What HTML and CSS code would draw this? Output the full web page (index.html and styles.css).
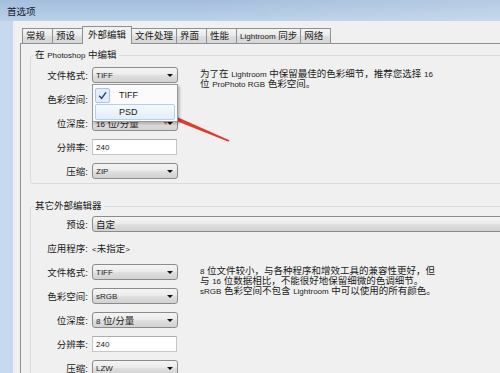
FILE: index.html
```html
<!DOCTYPE html>
<html lang="zh-CN">
<head>
<meta charset="utf-8">
<title>首选项</title>
<link rel="stylesheet" href="styles.css">
</head>
<body>
<div class="window">
  <div class="titlebar">首选项</div>
  <div class="client">
    <div class="tabs">
      <div class="tab">常规</div>
      <div class="tab">预设</div>
      <div class="tab active">外部编辑</div>
      <div class="tab">文件处理</div>
      <div class="tab">界面</div>
      <div class="tab">性能</div>
      <div class="tab"><span class="en">Lightroom</span> 同步</div>
      <div class="tab">网络</div>
    </div>
    <div class="panel">
      <fieldset class="group">
        <legend>在 <span class="en">Photoshop</span> 中编辑</legend>
        <div class="split first">
          <div class="rows">
            <div class="row">
              <label>文件格式:</label>
              <div class="combo"><span class="en">TIFF</span><i class="caret"></i>
                <div class="popup">
                  <div class="item"><span class="gutter checked"><svg width="13" height="13" viewBox="0 0 13 13"><path d="M3.2 6.8 L5.6 9.4 L10 3.4" fill="none" stroke="#23408e" stroke-width="1.5"/></svg></span><span class="en">TIFF</span></div>
                  <div class="item hot"><span class="gutter"></span><span class="en">PSD</span></div>
                </div>
              </div>
            </div>
            <div class="row">
              <label>色彩空间:</label>
              <div class="combo"><span></span><i class="caret"></i></div>
            </div>
            <div class="row">
              <label>位深度:</label>
              <div class="combo"><span><span class="en">16</span> 位/分量</span><i class="caret"></i></div>
            </div>
            <div class="row">
              <label>分辨率:</label>
              <div class="field"><span class="en">240</span></div>
            </div>
            <div class="row">
              <label>压缩:</label>
              <div class="combo"><span class="en">ZIP</span><i class="caret"></i></div>
            </div>
          </div>
          <p class="note">为了在 <span class="en">Lightroom</span> 中保留最佳的色彩细节，推荐您选择 <span class="en">16</span><br>位 <span class="en">ProPhoto RGB</span> 色彩空间。</p>
        </div>
      </fieldset>

      <fieldset class="group second">
        <legend>其它外部编辑器</legend>
        <div class="rows second-rows">
          <div class="row">
            <label>预设:</label>
            <div class="combo wide"><span>自定</span><i class="caret"></i></div>
          </div>
          <div class="row">
            <label>应用程序:</label>
            <span class="value"><span class="en">&lt;</span>未指定<span class="en">&gt;</span></span>
          </div>
          <div class="split">
            <div class="rows">
              <div class="row">
                <label>文件格式:</label>
                <div class="combo"><span class="en">TIFF</span><i class="caret"></i></div>
              </div>
              <div class="row">
                <label>色彩空间:</label>
                <div class="combo"><span class="en">sRGB</span><i class="caret"></i></div>
              </div>
              <div class="row">
                <label>位深度:</label>
                <div class="combo"><span><span class="en">8</span> 位/分量</span><i class="caret"></i></div>
              </div>
              <div class="row">
                <label>分辨率:</label>
                <div class="field"><span class="en">240</span></div>
              </div>
              <div class="row">
                <label>压缩:</label>
                <div class="combo"><span class="en">LZW</span><i class="caret"></i></div>
              </div>
            </div>
            <p class="note"><span class="en">8</span> 位文件较小，与各种程序和增效工具的兼容性更好，但<br>与 <span class="en">16</span> 位数据相比，不能很好地保留细微的色调细节。<br><span class="en">sRGB</span> 色彩空间不包含 <span class="en">Lightroom</span> 中可以使用的所有颜色。</p>
          </div>
        </div>
      </fieldset>
    </div>
  </div>
</div>
<svg class="arrow" width="500" height="373" viewBox="0 0 500 373">
  <polygon points="147,106.5 173.8,107.8 168.6,113.3 229.4,140.2 228.6,141.8 166.9,117.3 166.4,124.8" fill="#e23a30"/>
</svg>
</body>
</html>
```

FILE: styles.css
```css
* { box-sizing: border-box; }

html, body {
  margin: 0;
  padding: 0;
}

body {
  width: 500px;
  height: 373px;
  overflow: hidden;
  position: relative;
  background: #c6d9ef;
  color: #1a1a1a;
  font-family: "Liberation Sans", "Noto Sans CJK SC", sans-serif;
  font-size: 9.5px;
}

.en { font-size: 8px; }

.window { width: 640px; }

.titlebar {
  height: 21px;
  line-height: 23px;
  padding-left: 7px;
  color: #14202e;
  background:
    linear-gradient(to right, rgba(255,255,255,0) 30%, rgba(255,255,255,0.28) 100%),
    linear-gradient(#a4bedc, #bad0e9);
}

.client {
  margin-left: 13px;
  height: 352px;
  padding: 5px 0 0 7px;
  background: #f0f0f0;
}

/* tabs */
.tabs {
  display: flex;
  align-items: flex-end;
  height: 17px;
  padding-left: 2px;
}

.tab {
  height: 15px;
  min-width: 31px;
  padding: 0 3px;
  margin-left: -1px;
  line-height: 14px;
  white-space: nowrap;
  border: 1px solid #8d9095;
  border-bottom: none;
  background: linear-gradient(#f3f3f3, #ebebeb 45%, #dddddd 55%, #d6d6d6);
}

.tab:first-child { margin-left: 0; }

.tab.active {
  position: relative;
  z-index: 1;
  height: 18px;
  padding: 0 5px;
  margin-bottom: -1px;
  line-height: 16px;
  background: #f0f0f0;
}

.panel {
  border-top: 1px solid #8d9095;
  border-left: 1px solid #8d9095;
  padding: 5px 0 0 9px;
  height: 340px;
}

/* group boxes */
.group {
  margin: 0;
  padding: 0 0 4px 0;
  border: 1px solid #d7dce1;
  border-radius: 3px;
  min-width: 0;
}

.group.second { margin-top: 16px; }

legend {
  margin-left: 2px;
  padding: 0 2px;
  line-height: 12px;
}

.split {
  display: flex;
  align-items: flex-start;
}

.split.first { margin-top: 5px; }

.rows {
  display: flex;
  flex-direction: column;
  gap: 8px;
}

.second-rows { margin-top: 4px; }

.row {
  display: flex;
  align-items: center;
  height: 16px;
}

.row label {
  width: 57px;
  margin-right: 4px;
  text-align: right;
  white-space: nowrap;
}

.combo {
  position: relative;
  display: flex;
  align-items: center;
  justify-content: space-between;
  width: 86px;
  height: 16px;
  padding: 0 4px 0 3px;
  border: 1px solid #8b8b8b;
  border-radius: 3px;
  white-space: nowrap;
  background: linear-gradient(#f4f4f4, #ececec 45%, #dedede 55%, #d2d2d2);
}

.combo.wide { width: 440px; }

.caret {
  display: block;
  width: 0;
  height: 0;
  border-left: 3px solid transparent;
  border-right: 3px solid transparent;
  border-top: 3px solid #111;
}

.field {
  display: flex;
  align-items: center;
  width: 85px;
  height: 16px;
  padding-left: 3px;
  background: #fff;
  border: 1px solid #c4c6cc;
  border-top-color: #abadb3;
}

.value { white-space: nowrap; }

.note {
  margin: 2px 0 0 22px;
  line-height: 9px;
  white-space: nowrap;
}

/* dropdown list */
.popup {
  position: absolute;
  z-index: 5;
  left: -1px;
  top: 16px;
  width: 86px;
  padding: 2px 2px 1px 2px;
  background: #fbfbfb;
  border: 1px solid #979797;
  box-shadow: 2px 2px 2px rgba(0,0,0,0.22);
}

.item {
  display: flex;
  align-items: center;
  height: 16px;
  border: 1px solid transparent;
  border-radius: 2px;
}

.item .en { font-size: 9px; }

.item + .item { margin-top: 1px; }

.gutter {
  display: flex;
  align-items: center;
  justify-content: center;
  width: 15px;
  height: 15px;
  margin: 0 9px 0 -1px;
}

.gutter.checked {
  background: #e3edf9;
  border: 1px solid #a9c6ea;
  border-radius: 2px;
}

.item.hot {
  border-color: #b1d0ef;
  background: linear-gradient(#f4f9fe, #e3eefa);
}

.arrow {
  position: absolute;
  left: 0;
  top: 0;
  pointer-events: none;
}
```
